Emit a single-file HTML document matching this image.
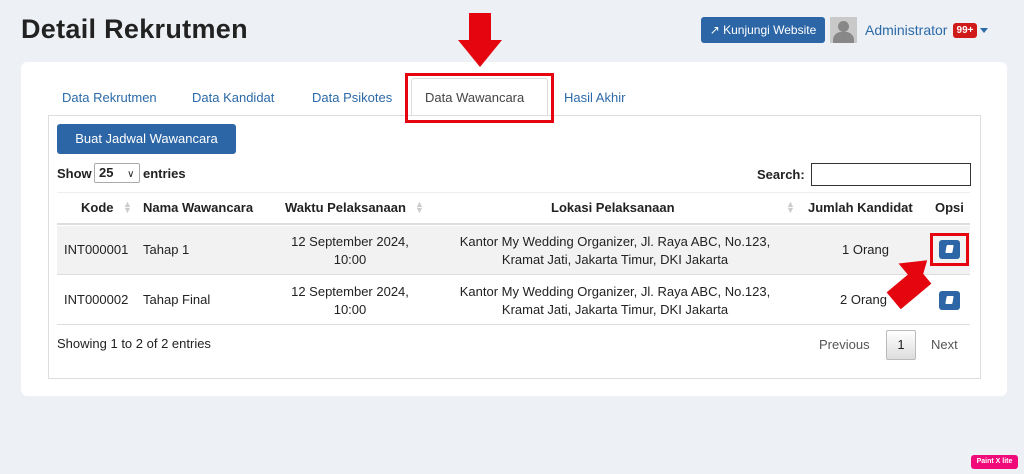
<!DOCTYPE html>
<html><head><style>
*{box-sizing:border-box;margin:0;padding:0}
body{width:1024px;height:474px;background:#edf0f5;font-family:"Liberation Sans",sans-serif;position:relative;overflow:hidden;color:#222}
.a{position:absolute;white-space:nowrap}
h1{position:absolute;left:21px;top:14px;font-size:27px;font-weight:bold;color:#222;letter-spacing:0.3px}
.card{position:absolute;left:21px;top:62px;width:986px;height:334px;background:#fff;border-radius:6px}
.tab{position:absolute;top:90px;font-size:13px;color:#2c6aa8}
.box{position:absolute;left:48px;top:115px;width:933px;height:264px;border:1px solid #ddd}
.row{position:absolute;left:57px;width:913px}
.ic{position:absolute;width:21px;height:19px;background:#2c66a6;border-radius:3px}
.ic:after{content:"";position:absolute;left:7px;top:5px;width:7px;height:8px;background:#fff;border-radius:1px;transform:skewX(-10deg)}
.sort{position:absolute;color:#ccc;font-size:9px;line-height:6px}
.red{position:absolute;border:3px solid #e5050f}
</style></head><body>
<h1>Detail Rekrutmen</h1>
<div class="a" style="left:701px;top:17px;width:124px;height:26px;background:#2c66a6;border-radius:3px;color:#fff;font-size:12px;line-height:26px;text-align:center">&#x2197; Kunjungi Website</div>
<div class="a" style="left:830px;top:17px;width:27px;height:26px;background:#c9c9c9;overflow:hidden"><div style="position:absolute;left:8px;top:4px;width:11px;height:11px;border-radius:50%;background:#888"></div><div style="position:absolute;left:3px;top:15px;width:21px;height:14px;border-radius:8px 8px 0 0;background:#888"></div></div>
<div class="a" style="left:865px;top:22px;font-size:14px;color:#2c6aa8">Administrator</div>
<div class="a" style="left:953px;top:23px;width:24px;height:15px;background:#d01a1a;border-radius:3px;color:#fff;font-size:10px;font-weight:bold;text-align:center;line-height:15px">99+</div>
<div class="a" style="left:980px;top:28px;border-left:4px solid transparent;border-right:4px solid transparent;border-top:5px solid #2c6aa8"></div>
<div class="card"></div>
<div class="tab" style="left:62px">Data Rekrutmen</div>
<div class="tab" style="left:192px">Data Kandidat</div>
<div class="tab" style="left:312px">Data Psikotes</div>
<div class="a" style="left:411px;top:78px;width:137px;height:38px;border:1px solid #ddd;border-bottom:none;background:#fff;border-radius:3px 3px 0 0"></div>
<div class="tab" style="left:425px;color:#444">Data Wawancara</div>
<div class="tab" style="left:564px">Hasil Akhir</div>
<div class="box"></div>
<div class="red" style="left:405px;top:73px;width:149px;height:50px"></div>
<div class="a" style="left:469px;top:13px;width:22px;height:28px;background:#e5050f"></div>
<div class="a" style="left:458px;top:40px;border-left:22px solid transparent;border-right:22px solid transparent;border-top:27px solid #e5050f"></div>
<div class="a" style="left:57px;top:124px;width:179px;height:30px;background:#2c66a6;border-radius:3px;color:#fff;font-size:13px;line-height:30px;text-align:center">Buat Jadwal Wawancara</div>
<div class="a" style="left:57px;top:166px;font-size:13px;font-weight:bold">Show</div>
<div class="a" style="left:94px;top:163px;width:46px;height:20px;border:1px solid #aaa;border-radius:2px;font-size:13px;font-weight:bold;padding-left:4px;line-height:18px">25 <span style="font-weight:normal;font-size:10px;margin-left:10px">&#x2228;</span></div>
<div class="a" style="left:143px;top:166px;font-size:13px;font-weight:bold">entries</div>
<div class="a" style="left:757px;top:167px;font-size:13px;font-weight:bold">Search:</div>
<div class="a" style="left:811px;top:163px;width:160px;height:23px;border:1px solid #333"></div>
<div class="row" style="top:192px;height:33px;border-top:1px solid #eee;border-bottom:2px solid #ddd"></div>
<div class="a" style="left:81px;top:200px;font-size:13px;font-weight:bold">Kode</div>
<div class="a" style="left:143px;top:200px;font-size:13px;font-weight:bold">Nama Wawancara</div>
<div class="a" style="left:285px;top:200px;font-size:13px;font-weight:bold">Waktu Pelaksanaan</div>
<div class="a" style="left:551px;top:200px;font-size:13px;font-weight:bold">Lokasi Pelaksanaan</div>
<div class="a" style="left:808px;top:200px;font-size:13px;font-weight:bold">Jumlah Kandidat</div>
<div class="a" style="left:935px;top:200px;font-size:13px;font-weight:bold">Opsi</div>
<div class="sort" style="left:123px;top:201px">▲<br>▼</div>
<div class="sort" style="left:415px;top:201px">▲<br>▼</div>
<div class="sort" style="left:786px;top:201px">▲<br>▼</div>
<div class="row" style="top:226px;height:49px;background:#f2f2f2;border-bottom:1px solid #ddd"></div>
<div class="row" style="top:275px;height:50px;border-bottom:1px solid #ddd"></div>
<div class="a" style="left:64px;top:242px;font-size:13px">INT000001</div>
<div class="a" style="left:143px;top:242px;font-size:13px">Tahap 1</div>
<div class="a" style="left:280px;top:233px;width:140px;text-align:center;font-size:13px;line-height:18px;white-space:normal">12 September 2024, 10:00</div>
<div class="a" style="left:440px;top:233px;width:350px;text-align:center;font-size:13px;line-height:18px;white-space:normal">Kantor My Wedding Organizer, Jl. Raya ABC, No.123, Kramat Jati, Jakarta Timur, DKI Jakarta</div>
<div class="a" style="left:842px;top:242px;font-size:13px">1 Orang</div>
<div class="ic" style="left:939px;top:240px"></div>
<div class="a" style="left:64px;top:292px;font-size:13px">INT000002</div>
<div class="a" style="left:143px;top:292px;font-size:13px">Tahap Final</div>
<div class="a" style="left:280px;top:283px;width:140px;text-align:center;font-size:13px;line-height:18px;white-space:normal">12 September 2024, 10:00</div>
<div class="a" style="left:440px;top:283px;width:350px;text-align:center;font-size:13px;line-height:18px;white-space:normal">Kantor My Wedding Organizer, Jl. Raya ABC, No.123, Kramat Jati, Jakarta Timur, DKI Jakarta</div>
<div class="a" style="left:840px;top:292px;font-size:13px">2 Orang</div>
<div class="ic" style="left:939px;top:291px"></div>
<div class="red" style="left:930px;top:233px;width:39px;height:33px"></div>
<div class="a" style="left:898px;top:268px;width:22px;height:40px;background:#e5050f;transform:rotate(50deg)"></div>
<div class="a" style="left:902px;top:256px;border-left:16px solid transparent;border-right:16px solid transparent;border-bottom:24px solid #e5050f;transform:rotate(50deg)"></div>
<div class="a" style="left:57px;top:336px;font-size:13px">Showing 1 to 2 of 2 entries</div>
<div class="a" style="left:819px;top:337px;font-size:13px;color:#555">Previous</div>
<div class="a" style="left:886px;top:330px;width:30px;height:30px;border:1px solid #bbb;border-radius:2px;background:linear-gradient(#fff,#ddd);font-size:13px;text-align:center;line-height:28px">1</div>
<div class="a" style="left:931px;top:337px;font-size:13px;color:#555">Next</div>
<div class="a" style="left:971px;top:455px;width:47px;height:14px;background:#f00a7a;border-radius:3px;color:#fff;font-size:7px;font-weight:bold;text-align:center;line-height:14px">Paint X lite</div>
</body></html>
